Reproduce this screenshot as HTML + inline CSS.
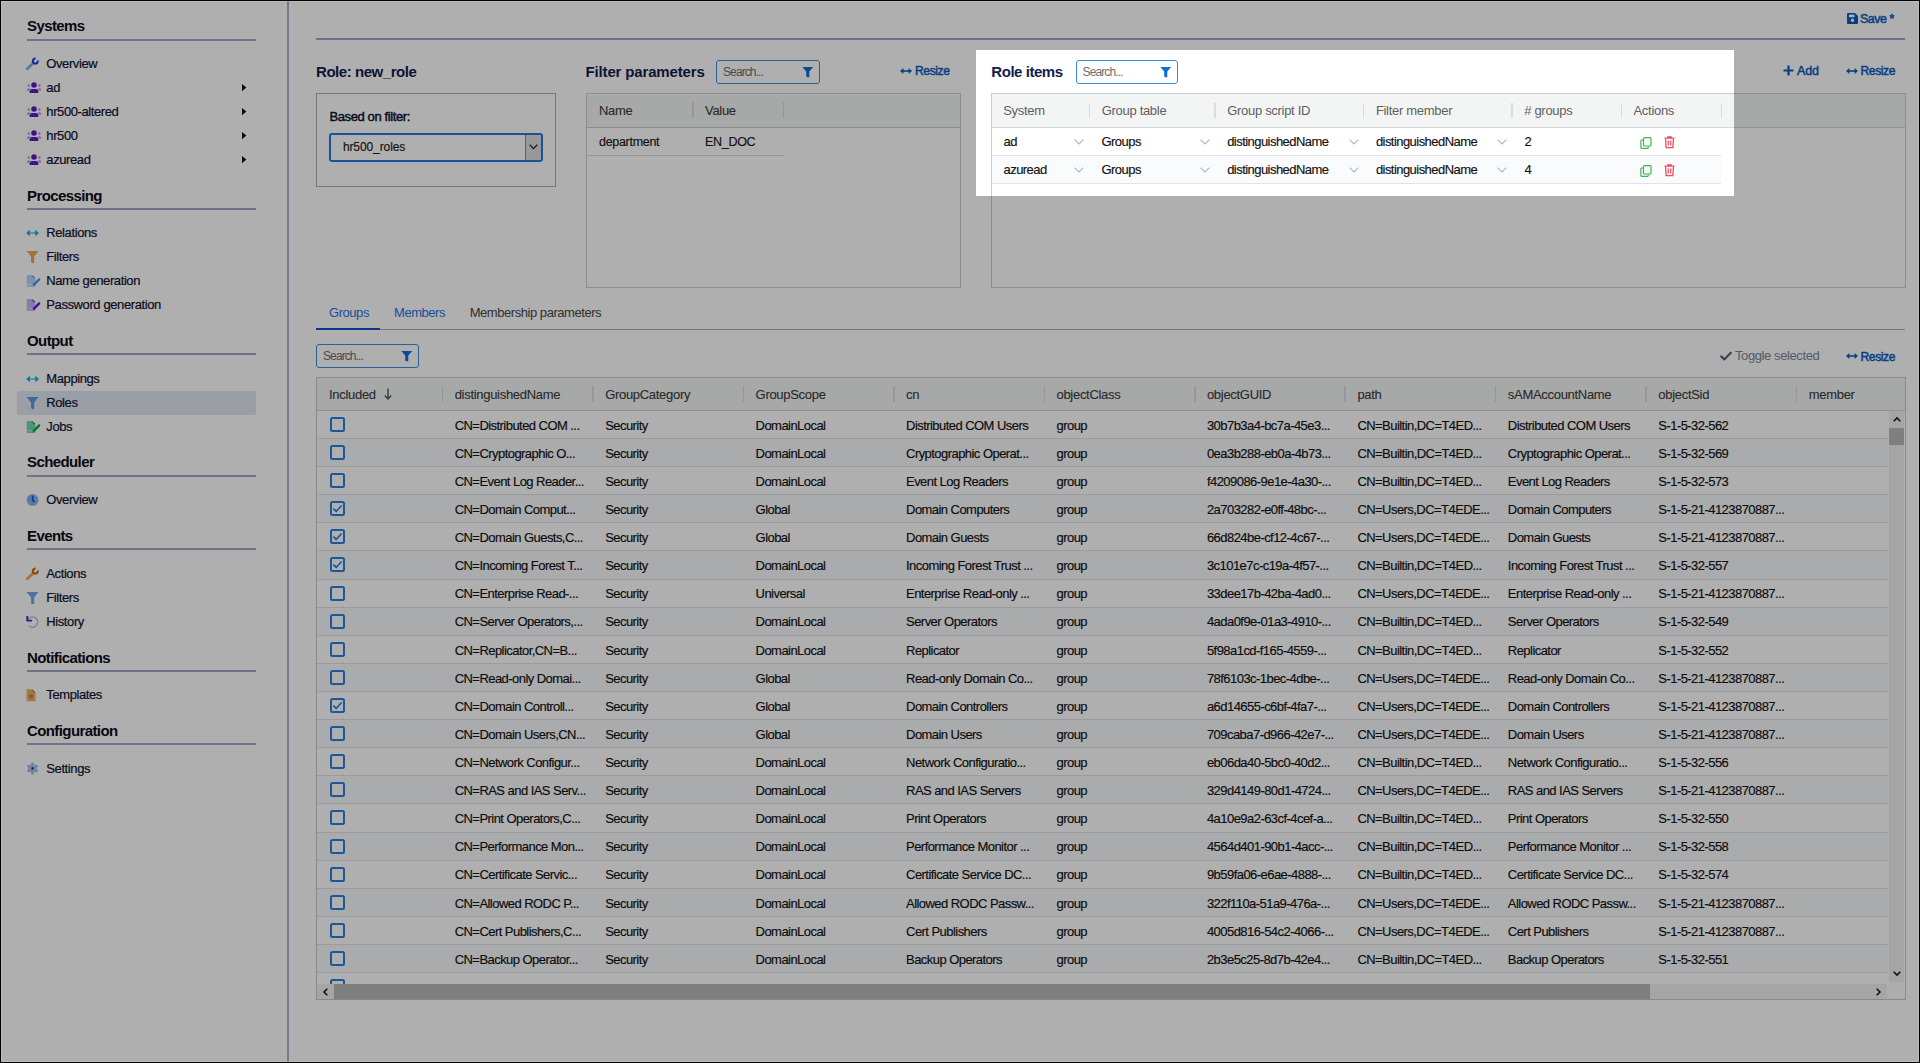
<!DOCTYPE html><html><head><meta charset="utf-8"><style>
*{box-sizing:border-box;margin:0;padding:0}
html,body{width:1920px;height:1063px;overflow:hidden}
body{position:relative;background:#fff;font-family:"Liberation Sans",sans-serif;color:#111}
.a{position:absolute;white-space:nowrap}
.b{position:absolute}
.hd{font-weight:bold;color:#0c0c18;letter-spacing:-0.6px}
.nv{color:#0f1230;letter-spacing:-0.4px;-webkit-text-stroke:0.2px #0f1230}
.lk{color:#0b5cc0;letter-spacing:-0.1px;-webkit-text-stroke:0.5px #0b5cc0}
.ttl{font-weight:bold;color:#141c4e;letter-spacing:-0.45px}
.cell{color:#111;letter-spacing:-0.55px;-webkit-text-stroke:0.15px #111}
.hcell{color:#5f5f5f;letter-spacing:-0.3px}
.hc2{color:#3c3c3c;letter-spacing:-0.3px;-webkit-text-stroke:0.1px #3c3c3c}
svg{position:absolute;overflow:visible}
</style></head><body><div class="b" style="left:286.5px;top:0;width:2px;height:1063px;background:#a9b2c7"></div><div class="a hd" style="left:27px;top:18.30px;font-size:15px;line-height:15px;">Systems</div><div class="b" style="left:27px;top:39px;width:229px;height:1.8px;background:#a0aac2"></div><div class="a hd" style="left:27px;top:187.70px;font-size:15px;line-height:15px;">Processing</div><div class="b" style="left:27px;top:208px;width:229px;height:1.8px;background:#a0aac2"></div><div class="a hd" style="left:27px;top:333.00px;font-size:15px;line-height:15px;">Output</div><div class="b" style="left:27px;top:353px;width:229px;height:1.8px;background:#a0aac2"></div><div class="a hd" style="left:27px;top:454.30px;font-size:15px;line-height:15px;">Scheduler</div><div class="b" style="left:27px;top:475px;width:229px;height:1.8px;background:#a0aac2"></div><div class="a hd" style="left:27px;top:528.10px;font-size:15px;line-height:15px;">Events</div><div class="b" style="left:27px;top:548px;width:229px;height:1.8px;background:#a0aac2"></div><div class="a hd" style="left:27px;top:649.90px;font-size:15px;line-height:15px;">Notifications</div><div class="b" style="left:27px;top:670px;width:229px;height:1.8px;background:#a0aac2"></div><div class="a hd" style="left:27px;top:723.10px;font-size:15px;line-height:15px;">Configuration</div><div class="b" style="left:27px;top:743px;width:229px;height:1.8px;background:#a0aac2"></div><div class="b" style="left:17px;top:391px;width:239px;height:24px;border-radius:3px;background:#dfe6f3"></div><svg style="left:26px;top:57px" width="14" height="14" viewBox="0 0 14 14"><path d="M1.3 11.8 L7.2 6.1" stroke="#84b0ee" stroke-width="2.8" stroke-linecap="round"/><path d="M9.52 1.6 A2.5 2.5 0 1 0 11.74 3.54" stroke="#1440d0" stroke-width="2.1" fill="none"/></svg><div class="a nv" style="left:46.3px;top:57.00px;font-size:13px;line-height:13px;">Overview</div><svg style="left:26px;top:82px" width="16" height="12" viewBox="0 0 16 12"><circle cx="2.7" cy="3.5" r="1.35" fill="#c2a2f6"/><circle cx="13.4" cy="3.5" r="1.35" fill="#c2a2f6"/><path d="M0.6 8.6 Q0.9 5.8 2.9 6.2 L4.2 6.6 L3.2 9.2 Z" fill="#c2a2f6"/><path d="M15.5 8.6 Q15.2 5.8 13.2 6.2 L11.9 6.6 L12.9 9.2 Z" fill="#c2a2f6"/><circle cx="8" cy="3" r="2.75" fill="#5a1cc0"/><path d="M3.7 11 V9.2 Q3.7 6.9 6 6.9 H10 Q12.3 6.9 12.3 9.2 V11 Z" fill="#5a1cc0"/></svg><div class="a nv" style="left:46.3px;top:81.00px;font-size:13px;line-height:13px;">ad</div><svg style="left:241.8px;top:84px" width="5" height="8" viewBox="0 0 5 8"><path d="M0 0 L4.4 3.6 L0 7.2Z" fill="#14142a"/></svg><svg style="left:26px;top:106px" width="16" height="12" viewBox="0 0 16 12"><circle cx="2.7" cy="3.5" r="1.35" fill="#c2a2f6"/><circle cx="13.4" cy="3.5" r="1.35" fill="#c2a2f6"/><path d="M0.6 8.6 Q0.9 5.8 2.9 6.2 L4.2 6.6 L3.2 9.2 Z" fill="#c2a2f6"/><path d="M15.5 8.6 Q15.2 5.8 13.2 6.2 L11.9 6.6 L12.9 9.2 Z" fill="#c2a2f6"/><circle cx="8" cy="3" r="2.75" fill="#5a1cc0"/><path d="M3.7 11 V9.2 Q3.7 6.9 6 6.9 H10 Q12.3 6.9 12.3 9.2 V11 Z" fill="#5a1cc0"/></svg><div class="a nv" style="left:46.3px;top:105.00px;font-size:13px;line-height:13px;">hr500-altered</div><svg style="left:241.8px;top:108px" width="5" height="8" viewBox="0 0 5 8"><path d="M0 0 L4.4 3.6 L0 7.2Z" fill="#14142a"/></svg><svg style="left:26px;top:130px" width="16" height="12" viewBox="0 0 16 12"><circle cx="2.7" cy="3.5" r="1.35" fill="#c2a2f6"/><circle cx="13.4" cy="3.5" r="1.35" fill="#c2a2f6"/><path d="M0.6 8.6 Q0.9 5.8 2.9 6.2 L4.2 6.6 L3.2 9.2 Z" fill="#c2a2f6"/><path d="M15.5 8.6 Q15.2 5.8 13.2 6.2 L11.9 6.6 L12.9 9.2 Z" fill="#c2a2f6"/><circle cx="8" cy="3" r="2.75" fill="#5a1cc0"/><path d="M3.7 11 V9.2 Q3.7 6.9 6 6.9 H10 Q12.3 6.9 12.3 9.2 V11 Z" fill="#5a1cc0"/></svg><div class="a nv" style="left:46.3px;top:129.00px;font-size:13px;line-height:13px;">hr500</div><svg style="left:241.8px;top:132px" width="5" height="8" viewBox="0 0 5 8"><path d="M0 0 L4.4 3.6 L0 7.2Z" fill="#14142a"/></svg><svg style="left:26px;top:154px" width="16" height="12" viewBox="0 0 16 12"><circle cx="2.7" cy="3.5" r="1.35" fill="#c2a2f6"/><circle cx="13.4" cy="3.5" r="1.35" fill="#c2a2f6"/><path d="M0.6 8.6 Q0.9 5.8 2.9 6.2 L4.2 6.6 L3.2 9.2 Z" fill="#c2a2f6"/><path d="M15.5 8.6 Q15.2 5.8 13.2 6.2 L11.9 6.6 L12.9 9.2 Z" fill="#c2a2f6"/><circle cx="8" cy="3" r="2.75" fill="#5a1cc0"/><path d="M3.7 11 V9.2 Q3.7 6.9 6 6.9 H10 Q12.3 6.9 12.3 9.2 V11 Z" fill="#5a1cc0"/></svg><div class="a nv" style="left:46.3px;top:153.00px;font-size:13px;line-height:13px;">azuread</div><svg style="left:241.8px;top:156px" width="5" height="8" viewBox="0 0 5 8"><path d="M0 0 L4.4 3.6 L0 7.2Z" fill="#14142a"/></svg><svg style="left:26px;top:229.4px" width="14" height="8" viewBox="0 0 14 8"><rect x="3.5" y="3" width="6.5" height="2" fill="#7fd6ee"/><path d="M0.2 4 L3.9 0.8 V7.2Z" fill="#00b4ec"/><path d="M13 4 L9.3 0.8 V7.2Z" fill="#00b4ec"/></svg><div class="a nv" style="left:46.3px;top:226.40px;font-size:13px;line-height:13px;">Relations</div><svg style="left:26px;top:251.39999999999998px" width="13" height="13" viewBox="0 0 13 13"><path d="M0.5 0 H12.5 L8.2 5.4 V11.8 L6.6 12.3 L5.1 11.3 V5.4 Z" fill="#e9a850"/></svg><div class="a nv" style="left:46.3px;top:250.40px;font-size:13px;line-height:13px;">Filters</div><svg style="left:26px;top:275.2px" width="15" height="13" viewBox="0 0 15 13"><path d="M0.8 0 H6.6 L9.3 2.7 V11.9 H0.8Z" fill="#b2d6fa"/><path d="M6.4 0.2 L9.2 3 L8.1 3.2 L6.3 1.4Z" fill="#3d95f5"/><path d="M8 9.6 L13.2 4.4" stroke="#3d95f5" stroke-width="2.2" stroke-linecap="round"/><path d="M1.8 10.2 Q3 8.2 4 9.6 Q4.8 10.4 6 9.8" stroke="#fff" stroke-opacity="0.65" stroke-width="0.9" fill="none"/></svg><div class="a nv" style="left:46.3px;top:274.40px;font-size:13px;line-height:13px;">Name generation</div><svg style="left:26px;top:298.8px" width="15" height="13" viewBox="0 0 15 13"><path d="M0.8 0 H6.6 L9.3 2.7 V11.9 H0.8Z" fill="#ccaef8"/><path d="M6.4 0.2 L9.2 3 L8.1 3.2 L6.3 1.4Z" fill="#5518c8"/><path d="M8 9.6 L13.2 4.4" stroke="#5518c8" stroke-width="2.2" stroke-linecap="round"/><path d="M1.8 10.2 Q3 8.2 4 9.6 Q4.8 10.4 6 9.8" stroke="#fff" stroke-opacity="0.65" stroke-width="0.9" fill="none"/></svg><div class="a nv" style="left:46.3px;top:298.00px;font-size:13px;line-height:13px;">Password generation</div><svg style="left:26px;top:374.8px" width="14" height="8" viewBox="0 0 14 8"><rect x="3.5" y="3" width="6.5" height="2" fill="#7fd6ee"/><path d="M0.2 4 L3.9 0.8 V7.2Z" fill="#00b4ec"/><path d="M13 4 L9.3 0.8 V7.2Z" fill="#00b4ec"/></svg><div class="a nv" style="left:46.3px;top:371.80px;font-size:13px;line-height:13px;">Mappings</div><svg style="left:26px;top:396.8px" width="13" height="13" viewBox="0 0 13 13"><path d="M0.5 0 H12.5 L8.2 5.4 V11.8 L6.6 12.3 L5.1 11.3 V5.4 Z" fill="#5e9ae6"/></svg><div class="a nv" style="left:46.3px;top:395.80px;font-size:13px;line-height:13px;">Roles</div><svg style="left:26px;top:420.8px" width="15" height="13" viewBox="0 0 15 13"><path d="M0.8 0 H6.6 L9.3 2.7 V11.9 H0.8Z" fill="#70d6aa"/><path d="M6.4 0.2 L9.2 3 L8.1 3.2 L6.3 1.4Z" fill="#00a040"/><path d="M8 9.6 L13.2 4.4" stroke="#00a040" stroke-width="2.2" stroke-linecap="round"/><path d="M1.8 10.2 Q3 8.2 4 9.6 Q4.8 10.4 6 9.8" stroke="#fff" stroke-opacity="0.65" stroke-width="0.9" fill="none"/></svg><div class="a nv" style="left:46.3px;top:420.00px;font-size:13px;line-height:13px;">Jobs</div><svg style="left:26px;top:494px" width="13" height="12" viewBox="0 0 13 12"><circle cx="6.6" cy="6" r="5.9" fill="#86b2ee"/><path d="M6.6 2.6 V6.3 L8.1 7.6" stroke="#0052d8" stroke-width="1.6" fill="none" stroke-linecap="round"/></svg><div class="a nv" style="left:46.3px;top:493.00px;font-size:13px;line-height:13px;">Overview</div><svg style="left:26px;top:567px" width="14" height="14" viewBox="0 0 14 14"><path d="M1.3 11.8 L7.2 6.1" stroke="#f0a860" stroke-width="2.8" stroke-linecap="round"/><path d="M9.52 1.6 A2.5 2.5 0 1 0 11.74 3.54" stroke="#d45f00" stroke-width="2.1" fill="none"/></svg><div class="a nv" style="left:46.3px;top:567.00px;font-size:13px;line-height:13px;">Actions</div><svg style="left:26px;top:592px" width="13" height="13" viewBox="0 0 13 13"><path d="M0.5 0 H12.5 L8.2 5.4 V11.8 L6.6 12.3 L5.1 11.3 V5.4 Z" fill="#6fa6ee"/></svg><div class="a nv" style="left:46.3px;top:591.00px;font-size:13px;line-height:13px;">Filters</div><svg style="left:26px;top:615.7px" width="14" height="13" viewBox="0 0 14 13"><path d="M2.9 2.4 A5.1 5.1 0 1 1 3.4 10.2" stroke="#c6a8f2" stroke-width="1.4" fill="none" stroke-linecap="round"/><path d="M1.3 0.6 V4.6 H5.3" stroke="#5518c0" stroke-width="1.9" fill="none" stroke-linecap="round" stroke-linejoin="round"/></svg><div class="a nv" style="left:46.3px;top:614.70px;font-size:13px;line-height:13px;">History</div><svg style="left:26px;top:688.7px" width="11" height="13" viewBox="0 0 11 13"><path d="M0.5 0.2 H6.3 L9.5 3.4 V12.3 H0.5Z" fill="#eab266"/><path d="M6.1 0.4 L9.3 3.6 L8.2 3.8 L6.2 1.8Z" fill="#c85a00"/><rect x="3" y="5.3" width="4" height="3.9" fill="#c85a00" fill-opacity="0.55"/></svg><div class="a nv" style="left:46.3px;top:688.00px;font-size:13px;line-height:13px;">Templates</div><svg style="left:26px;top:762.2px" width="13" height="13" viewBox="0 0 13 13"><rect x="5.2" y="0.6" width="2.6" height="3.2" rx="0.7" fill="#9bbde9" transform="rotate(0 6.5 6.5)"/><rect x="5.2" y="0.6" width="2.6" height="3.2" rx="0.7" fill="#9bbde9" transform="rotate(60 6.5 6.5)"/><rect x="5.2" y="0.6" width="2.6" height="3.2" rx="0.7" fill="#9bbde9" transform="rotate(120 6.5 6.5)"/><rect x="5.2" y="0.6" width="2.6" height="3.2" rx="0.7" fill="#9bbde9" transform="rotate(180 6.5 6.5)"/><rect x="5.2" y="0.6" width="2.6" height="3.2" rx="0.7" fill="#9bbde9" transform="rotate(240 6.5 6.5)"/><rect x="5.2" y="0.6" width="2.6" height="3.2" rx="0.7" fill="#9bbde9" transform="rotate(300 6.5 6.5)"/><circle cx="6.5" cy="6.5" r="4.1" fill="#9bbde9"/><circle cx="6.5" cy="6.5" r="2.3" fill="#fff" fill-opacity="0.55"/><circle cx="6.5" cy="6.5" r="1.4" fill="#0047b3"/></svg><div class="a nv" style="left:46.3px;top:761.70px;font-size:13px;line-height:13px;">Settings</div><div class="b" style="left:316px;top:38.3px;width:1589px;height:1.6px;background:#9ba6bf"></div><svg style="left:1847px;top:13px" width="11" height="11" viewBox="0 0 11 11"><path d="M0 1 Q0 0 1 0 H8 L11 3 V10 Q11 11 10 11 H1 Q0 11 0 10Z" fill="#0b5cc0"/><rect x="2" y="1.6" width="5.5" height="2.6" fill="#fff"/><circle cx="5.5" cy="7.3" r="1.7" fill="#fff"/></svg><div class="a lk" style="left:1860px;top:13.22px;font-size:12.5px;line-height:12.5px;letter-spacing:-0.5px">Save *</div><div class="a ttl" style="left:316px;top:64.20px;font-size:15px;line-height:15px;">Role: new_role</div><div class="b" style="left:316px;top:93px;width:240px;height:94px;border:1.3px solid #aab1b8"></div><div class="a nv" style="left:329.4px;top:110.30px;font-size:13px;line-height:13px;letter-spacing:-0.38px;-webkit-text-stroke:0.45px #0f1230;">Based on filter:</div><div class="b" style="left:329px;top:132.5px;width:213.5px;height:29px;border:2px solid #2378e0;border-radius:3px;background:#fff"></div><div class="b" style="left:525px;top:134.5px;width:15.5px;height:25px;background:#dedede;border-left:1px solid #8a8a8a"></div><svg style="left:528.5px;top:143.5px" width="9" height="6" viewBox="0 0 9 6"><path d="M0.8 0.8 L4.5 4.6 L8.2 0.8" stroke="#222" stroke-width="1.3" fill="none"/></svg><div class="a cell" style="left:342.9px;top:141.04px;font-size:12px;line-height:12px;letter-spacing:-0.1px;color:#222">hr500_roles</div><div class="a ttl" style="left:585.5px;top:64.20px;font-size:15px;line-height:15px;letter-spacing:-0.15px">Filter parameters</div><div class="b" style="left:716px;top:60.2px;width:103.5px;height:24px;border:1.6px solid #3d8fe0;border-radius:3px;background:#fff"></div><div class="a " style="left:723px;top:65.84px;font-size:12px;line-height:12px;color:#6e6e6e;letter-spacing:-0.9px;">Search...</div><svg style="left:801.7px;top:66.5px" width="12" height="11" viewBox="0 0 12 11"><path d="M0.3 0 H11.2 L7.3 4.6 V10.1 L5.9 10.6 L4.2 9.6 V4.6 Z" fill="#0b6fd8"/></svg><svg style="left:900px;top:67px" width="12" height="8" viewBox="0 0 12 8"><path d="M2 4 H10" stroke="#0b5cc0" stroke-width="1.6"/><path d="M0 4 L3.4 1 V7Z M12 4 L8.6 1 V7Z" fill="#0b5cc0"/></svg><div class="a lk" style="left:915px;top:65.24px;font-size:12px;line-height:12px;letter-spacing:-0.35px;">Resize</div><div class="b" style="left:586px;top:93px;width:375px;height:195px;border:1.5px solid #c9ced6;background:#fff"></div><div class="b" style="left:587px;top:94.5px;width:373px;height:33px;background:#f3f5f5;border-bottom:1px solid #c9cfd4"></div><div class="b" style="left:692px;top:102px;width:1.5px;height:16px;background:#dcdcdc"></div><div class="b" style="left:782.5px;top:102px;width:1.5px;height:16px;background:#dcdcdc"></div><div class="a hc2" style="left:599px;top:104.00px;font-size:13px;line-height:13px;">Name</div><div class="a hc2" style="left:705px;top:104.00px;font-size:13px;line-height:13px;">Value</div><div class="a cell" style="left:599px;top:135.72px;font-size:12.5px;line-height:12.5px;color:#1a1a1a;letter-spacing:-0.3px">department</div><div class="a cell" style="left:705px;top:135.72px;font-size:12.5px;line-height:12.5px;color:#1a1a1a;letter-spacing:-0.3px">EN_DOC</div><div class="b" style="left:587px;top:155px;width:196.5px;height:1px;background:#d6dadf"></div><div class="a ttl" style="left:991.3px;top:64.20px;font-size:15px;line-height:15px;">Role items</div><div class="b" style="left:1075.6px;top:60.2px;width:102.6px;height:24px;border:1.6px solid #3d8fe0;border-radius:3px;background:#fff"></div><div class="a " style="left:1082.6px;top:65.84px;font-size:12px;line-height:12px;color:#6e6e6e;letter-spacing:-0.9px;">Search...</div><svg style="left:1160.4px;top:66.5px" width="12" height="11" viewBox="0 0 12 11"><path d="M0.3 0 H11.2 L7.3 4.6 V10.1 L5.9 10.6 L4.2 9.6 V4.6 Z" fill="#0b6fd8"/></svg><svg style="left:1783px;top:65px" width="11" height="11" viewBox="0 0 11 11"><path d="M5.5 0.5 V10.5 M0.5 5.5 H10.5" stroke="#0b5cc0" stroke-width="2.2"/></svg><div class="a lk" style="left:1797px;top:64.92px;font-size:12.5px;line-height:12.5px;letter-spacing:-0.2px;">Add</div><svg style="left:1845.5px;top:67px" width="12" height="8" viewBox="0 0 12 8"><path d="M2 4 H10" stroke="#0b5cc0" stroke-width="1.6"/><path d="M0 4 L3.4 1 V7Z M12 4 L8.6 1 V7Z" fill="#0b5cc0"/></svg><div class="a lk" style="left:1860.5px;top:65.24px;font-size:12px;line-height:12px;letter-spacing:-0.35px;">Resize</div><div class="b" style="left:990.5px;top:93.3px;width:915px;height:194.5px;border:1.5px solid #c9ced6;background:#fff"></div><div class="b" style="left:991.5px;top:94.3px;width:913px;height:33.7px;background:#f3f5f5;border-bottom:1.5px solid #d3d8dd"></div><div class="a hcell" style="left:1003.2px;top:104.00px;font-size:13px;line-height:13px;">System</div><div class="b" style="left:1088.7px;top:102.5px;width:1.5px;height:15px;background:#dcdcdc"></div><div class="a hcell" style="left:1101.7px;top:104.00px;font-size:13px;line-height:13px;">Group table</div><div class="b" style="left:1214.2px;top:102.5px;width:1.5px;height:15px;background:#dcdcdc"></div><div class="a hcell" style="left:1227.2px;top:104.00px;font-size:13px;line-height:13px;">Group script ID</div><div class="b" style="left:1362.9px;top:102.5px;width:1.5px;height:15px;background:#dcdcdc"></div><div class="a hcell" style="left:1375.9px;top:104.00px;font-size:13px;line-height:13px;">Filter member</div><div class="b" style="left:1511.2px;top:102.5px;width:1.5px;height:15px;background:#dcdcdc"></div><div class="a hcell" style="left:1524.2px;top:104.00px;font-size:13px;line-height:13px;"># groups</div><div class="b" style="left:1620.5px;top:102.5px;width:1.5px;height:15px;background:#dcdcdc"></div><div class="a hcell" style="left:1633.5px;top:104.00px;font-size:13px;line-height:13px;">Actions</div><div class="b" style="left:1720.9px;top:102.5px;width:1.5px;height:15px;background:#dcdcdc"></div><div class="b" style="left:992px;top:128.0px;width:729.4px;height:28px;background:#fff;border-bottom:1px solid #dfe2e6"></div><div class="a cell" style="left:1003.5px;top:135.20px;font-size:13px;line-height:13px;">ad</div><svg style="left:1074px;top:139px" width="10" height="6" viewBox="0 0 10 6"><path d="M0.6 0.6 L5 5 L9.4 0.6" stroke="#a6b4d4" stroke-width="1.1" fill="none"/></svg><div class="a cell" style="left:1101.5px;top:135.20px;font-size:13px;line-height:13px;">Groups</div><svg style="left:1200px;top:139px" width="10" height="6" viewBox="0 0 10 6"><path d="M0.6 0.6 L5 5 L9.4 0.6" stroke="#a6b4d4" stroke-width="1.1" fill="none"/></svg><div class="a cell" style="left:1227.2px;top:135.20px;font-size:13px;line-height:13px;">distinguishedName</div><svg style="left:1349px;top:139px" width="10" height="6" viewBox="0 0 10 6"><path d="M0.6 0.6 L5 5 L9.4 0.6" stroke="#a6b4d4" stroke-width="1.1" fill="none"/></svg><div class="a cell" style="left:1375.9px;top:135.20px;font-size:13px;line-height:13px;">distinguishedName</div><svg style="left:1497px;top:139px" width="10" height="6" viewBox="0 0 10 6"><path d="M0.6 0.6 L5 5 L9.4 0.6" stroke="#a6b4d4" stroke-width="1.1" fill="none"/></svg><div class="a cell" style="left:1524.4px;top:135.20px;font-size:13px;line-height:13px;">2</div><svg style="left:1639.5px;top:136.5px" width="12" height="12" viewBox="0 0 12 12"><rect x="3.5" y="0.7" width="7.5" height="8.3" rx="1" fill="none" stroke="#3db84a" stroke-width="1.2"/><path d="M3 3 H1.6 Q0.9 3 0.9 3.7 V10.6 Q0.9 11.3 1.6 11.3 H7.6 Q8.3 11.3 8.3 10.6 V9.6" fill="none" stroke="#3db84a" stroke-width="1.2"/></svg><svg style="left:1663.5px;top:136px" width="11" height="12" viewBox="0 0 11 12"><path d="M0.5 2.2 H10.5 M3.8 2 V0.8 H7.2 V2" stroke="#f04a5c" stroke-width="1.3" fill="none"/><path d="M1.6 2.8 L2.1 11.6 H8.9 L9.4 2.8" stroke="#f04a5c" stroke-width="1.3" fill="none"/><path d="M4.3 4.6 V9.6 M6.7 4.6 V9.6" stroke="#f04a5c" stroke-width="1.2"/></svg><div class="b" style="left:992px;top:156.2px;width:729.4px;height:28px;background:#fafbfd;border-bottom:1px solid #dfe2e6"></div><div class="a cell" style="left:1003.5px;top:163.40px;font-size:13px;line-height:13px;">azuread</div><svg style="left:1074px;top:167.2px" width="10" height="6" viewBox="0 0 10 6"><path d="M0.6 0.6 L5 5 L9.4 0.6" stroke="#a6b4d4" stroke-width="1.1" fill="none"/></svg><div class="a cell" style="left:1101.5px;top:163.40px;font-size:13px;line-height:13px;">Groups</div><svg style="left:1200px;top:167.2px" width="10" height="6" viewBox="0 0 10 6"><path d="M0.6 0.6 L5 5 L9.4 0.6" stroke="#a6b4d4" stroke-width="1.1" fill="none"/></svg><div class="a cell" style="left:1227.2px;top:163.40px;font-size:13px;line-height:13px;">distinguishedName</div><svg style="left:1349px;top:167.2px" width="10" height="6" viewBox="0 0 10 6"><path d="M0.6 0.6 L5 5 L9.4 0.6" stroke="#a6b4d4" stroke-width="1.1" fill="none"/></svg><div class="a cell" style="left:1375.9px;top:163.40px;font-size:13px;line-height:13px;">distinguishedName</div><svg style="left:1497px;top:167.2px" width="10" height="6" viewBox="0 0 10 6"><path d="M0.6 0.6 L5 5 L9.4 0.6" stroke="#a6b4d4" stroke-width="1.1" fill="none"/></svg><div class="a cell" style="left:1524.4px;top:163.40px;font-size:13px;line-height:13px;">4</div><svg style="left:1639.5px;top:164.7px" width="12" height="12" viewBox="0 0 12 12"><rect x="3.5" y="0.7" width="7.5" height="8.3" rx="1" fill="none" stroke="#3db84a" stroke-width="1.2"/><path d="M3 3 H1.6 Q0.9 3 0.9 3.7 V10.6 Q0.9 11.3 1.6 11.3 H7.6 Q8.3 11.3 8.3 10.6 V9.6" fill="none" stroke="#3db84a" stroke-width="1.2"/></svg><svg style="left:1663.5px;top:164.2px" width="11" height="12" viewBox="0 0 11 12"><path d="M0.5 2.2 H10.5 M3.8 2 V0.8 H7.2 V2" stroke="#f04a5c" stroke-width="1.3" fill="none"/><path d="M1.6 2.8 L2.1 11.6 H8.9 L9.4 2.8" stroke="#f04a5c" stroke-width="1.3" fill="none"/><path d="M4.3 4.6 V9.6 M6.7 4.6 V9.6" stroke="#f04a5c" stroke-width="1.2"/></svg><div class="b" style="left:316px;top:328.5px;width:1589px;height:1.5px;background:#a3adc4"></div><div class="b" style="left:316px;top:327.6px;width:64px;height:2.6px;background:#1050c8"></div><div class="a " style="left:329px;top:306.00px;font-size:13px;line-height:13px;color:#1f74e0;letter-spacing:-0.45px">Groups</div><div class="a " style="left:394px;top:306.00px;font-size:13px;line-height:13px;color:#1f74e0;letter-spacing:-0.45px">Members</div><div class="a " style="left:469.7px;top:306.00px;font-size:13px;line-height:13px;color:#474747;letter-spacing:-0.45px">Membership parameters</div><div class="b" style="left:316px;top:344.4px;width:102.8px;height:24px;border:1.6px solid #3d8fe0;border-radius:3px;background:#fff"></div><div class="a " style="left:323px;top:350.04px;font-size:12px;line-height:12px;color:#6e6e6e;letter-spacing:-0.9px;">Search...</div><svg style="left:401.0px;top:350.7px" width="12" height="11" viewBox="0 0 12 11"><path d="M0.3 0 H11.2 L7.3 4.6 V10.1 L5.9 10.6 L4.2 9.6 V4.6 Z" fill="#0b6fd8"/></svg><svg style="left:1719.5px;top:351px" width="12" height="10" viewBox="0 0 12 10"><path d="M1.2 5.4 L4.3 8.4 L10.8 1.8" stroke="#5a6684" stroke-width="2.2" fill="none" stroke-linecap="round" stroke-linejoin="round"/></svg><div class="a " style="left:1735px;top:349.40px;font-size:13px;line-height:13px;color:#7d8596;letter-spacing:-0.4px">Toggle selected</div><svg style="left:1845.5px;top:352.3px" width="12" height="8" viewBox="0 0 12 8"><path d="M2 4 H10" stroke="#0b5cc0" stroke-width="1.6"/><path d="M0 4 L3.4 1 V7Z M12 4 L8.6 1 V7Z" fill="#0b5cc0"/></svg><div class="a lk" style="left:1860.5px;top:350.54px;font-size:12px;line-height:12px;letter-spacing:-0.35px;">Resize</div><div class="b" style="left:316px;top:377px;width:1590px;height:623px;border:1px solid #c4cad0;background:#fff;overflow:hidden"><div class="b" style="left:0;top:0;width:1600px;height:33.0px;background:#f3f5f5;border-bottom:1px solid #d0d5da"></div><div class="b" style="left:124.7px;top:8.0px;width:1.5px;height:16px;background:#dcdcdc"></div><div class="a hc2" style="left:137.70px;top:10.00px;font-size:13px;line-height:13px;">distinguishedName</div><div class="b" style="left:275.1px;top:8.0px;width:1.5px;height:16px;background:#dcdcdc"></div><div class="a hc2" style="left:288.15px;top:10.00px;font-size:13px;line-height:13px;">GroupCategory</div><div class="b" style="left:425.6px;top:8.0px;width:1.5px;height:16px;background:#dcdcdc"></div><div class="a hc2" style="left:438.60px;top:10.00px;font-size:13px;line-height:13px;">GroupScope</div><div class="b" style="left:576.0px;top:8.0px;width:1.5px;height:16px;background:#dcdcdc"></div><div class="a hc2" style="left:589.05px;top:10.00px;font-size:13px;line-height:13px;">cn</div><div class="b" style="left:726.5px;top:8.0px;width:1.5px;height:16px;background:#dcdcdc"></div><div class="a hc2" style="left:739.50px;top:10.00px;font-size:13px;line-height:13px;">objectClass</div><div class="b" style="left:877.0px;top:8.0px;width:1.5px;height:16px;background:#dcdcdc"></div><div class="a hc2" style="left:889.95px;top:10.00px;font-size:13px;line-height:13px;">objectGUID</div><div class="b" style="left:1027.4px;top:8.0px;width:1.5px;height:16px;background:#dcdcdc"></div><div class="a hc2" style="left:1040.40px;top:10.00px;font-size:13px;line-height:13px;">path</div><div class="b" style="left:1177.8px;top:8.0px;width:1.5px;height:16px;background:#dcdcdc"></div><div class="a hc2" style="left:1190.85px;top:10.00px;font-size:13px;line-height:13px;">sAMAccountName</div><div class="b" style="left:1328.3px;top:8.0px;width:1.5px;height:16px;background:#dcdcdc"></div><div class="a hc2" style="left:1341.30px;top:10.00px;font-size:13px;line-height:13px;">objectSid</div><div class="b" style="left:1478.8px;top:8.0px;width:1.5px;height:16px;background:#dcdcdc"></div><div class="a hc2" style="left:1491.75px;top:10.00px;font-size:13px;line-height:13px;">member</div><div class="a hc2" style="left:12.00px;top:10.00px;font-size:13px;line-height:13px;">Included</div><svg style="left:67.0px;top:10.0px" width="8" height="12" viewBox="0 0 8 12"><path d="M4 0.5 V11 M0.8 7.6 L4 11 L7.2 7.6" stroke="#555" stroke-width="1.4" fill="none"/></svg><div class="b" style="left:0;top:32.95px;width:1570.5px;height:28.11px;background:#fff;border-bottom:1px solid #dfe2e6"></div><div class="b" style="left:13.2px;top:38.95px;width:15px;height:15px;border:2px solid #2a7fe0;border-radius:2.5px;background:#fff"></div><div class="a cell" style="left:137.70px;top:40.75px;font-size:13px;line-height:13px;">CN=Distributed COM ...</div><div class="a cell" style="left:288.15px;top:40.75px;font-size:13px;line-height:13px;">Security</div><div class="a cell" style="left:438.60px;top:40.75px;font-size:13px;line-height:13px;">DomainLocal</div><div class="a cell" style="left:589.05px;top:40.75px;font-size:13px;line-height:13px;">Distributed COM Users</div><div class="a cell" style="left:739.50px;top:40.75px;font-size:13px;line-height:13px;">group</div><div class="a cell" style="left:889.95px;top:40.75px;font-size:13px;line-height:13px;">30b7b3a4-bc7a-45e3...</div><div class="a cell" style="left:1040.40px;top:40.75px;font-size:13px;line-height:13px;">CN=Builtin,DC=T4ED...</div><div class="a cell" style="left:1190.85px;top:40.75px;font-size:13px;line-height:13px;">Distributed COM Users</div><div class="a cell" style="left:1341.30px;top:40.75px;font-size:13px;line-height:13px;">S-1-5-32-562</div><div class="b" style="left:0;top:61.06px;width:1570.5px;height:28.11px;background:#f8f9fc;border-bottom:1px solid #dfe2e6"></div><div class="b" style="left:13.2px;top:67.06px;width:15px;height:15px;border:2px solid #2a7fe0;border-radius:2.5px;background:#fff"></div><div class="a cell" style="left:137.70px;top:68.85px;font-size:13px;line-height:13px;">CN=Cryptographic O...</div><div class="a cell" style="left:288.15px;top:68.85px;font-size:13px;line-height:13px;">Security</div><div class="a cell" style="left:438.60px;top:68.85px;font-size:13px;line-height:13px;">DomainLocal</div><div class="a cell" style="left:589.05px;top:68.85px;font-size:13px;line-height:13px;">Cryptographic Operat...</div><div class="a cell" style="left:739.50px;top:68.85px;font-size:13px;line-height:13px;">group</div><div class="a cell" style="left:889.95px;top:68.85px;font-size:13px;line-height:13px;">0ea3b288-eb0a-4b73...</div><div class="a cell" style="left:1040.40px;top:68.85px;font-size:13px;line-height:13px;">CN=Builtin,DC=T4ED...</div><div class="a cell" style="left:1190.85px;top:68.85px;font-size:13px;line-height:13px;">Cryptographic Operat...</div><div class="a cell" style="left:1341.30px;top:68.85px;font-size:13px;line-height:13px;">S-1-5-32-569</div><div class="b" style="left:0;top:89.16px;width:1570.5px;height:28.11px;background:#fff;border-bottom:1px solid #dfe2e6"></div><div class="b" style="left:13.2px;top:95.16px;width:15px;height:15px;border:2px solid #2a7fe0;border-radius:2.5px;background:#fff"></div><div class="a cell" style="left:137.70px;top:96.96px;font-size:13px;line-height:13px;">CN=Event Log Reader...</div><div class="a cell" style="left:288.15px;top:96.96px;font-size:13px;line-height:13px;">Security</div><div class="a cell" style="left:438.60px;top:96.96px;font-size:13px;line-height:13px;">DomainLocal</div><div class="a cell" style="left:589.05px;top:96.96px;font-size:13px;line-height:13px;">Event Log Readers</div><div class="a cell" style="left:739.50px;top:96.96px;font-size:13px;line-height:13px;">group</div><div class="a cell" style="left:889.95px;top:96.96px;font-size:13px;line-height:13px;">f4209086-9e1e-4a30-...</div><div class="a cell" style="left:1040.40px;top:96.96px;font-size:13px;line-height:13px;">CN=Builtin,DC=T4ED...</div><div class="a cell" style="left:1190.85px;top:96.96px;font-size:13px;line-height:13px;">Event Log Readers</div><div class="a cell" style="left:1341.30px;top:96.96px;font-size:13px;line-height:13px;">S-1-5-32-573</div><div class="b" style="left:0;top:117.26px;width:1570.5px;height:28.11px;background:#f8f9fc;border-bottom:1px solid #dfe2e6"></div><div class="b" style="left:13.2px;top:123.26px;width:15px;height:15px;border:2px solid #2a7fe0;border-radius:2.5px;background:#fff"></div><svg style="left:13.2px;top:123.26px" width="15" height="15" viewBox="0 0 15 15"><path d="M3.4 7.6 L6.2 10.4 L11.6 4.6" stroke="#1f74e0" stroke-width="1.5" fill="none"/></svg><div class="a cell" style="left:137.70px;top:125.06px;font-size:13px;line-height:13px;">CN=Domain Comput...</div><div class="a cell" style="left:288.15px;top:125.06px;font-size:13px;line-height:13px;">Security</div><div class="a cell" style="left:438.60px;top:125.06px;font-size:13px;line-height:13px;">Global</div><div class="a cell" style="left:589.05px;top:125.06px;font-size:13px;line-height:13px;">Domain Computers</div><div class="a cell" style="left:739.50px;top:125.06px;font-size:13px;line-height:13px;">group</div><div class="a cell" style="left:889.95px;top:125.06px;font-size:13px;line-height:13px;">2a703282-e0ff-48bc-...</div><div class="a cell" style="left:1040.40px;top:125.06px;font-size:13px;line-height:13px;">CN=Users,DC=T4EDE...</div><div class="a cell" style="left:1190.85px;top:125.06px;font-size:13px;line-height:13px;">Domain Computers</div><div class="a cell" style="left:1341.30px;top:125.06px;font-size:13px;line-height:13px;">S-1-5-21-4123870887...</div><div class="b" style="left:0;top:145.37px;width:1570.5px;height:28.11px;background:#fff;border-bottom:1px solid #dfe2e6"></div><div class="b" style="left:13.2px;top:151.37px;width:15px;height:15px;border:2px solid #2a7fe0;border-radius:2.5px;background:#fff"></div><svg style="left:13.2px;top:151.37px" width="15" height="15" viewBox="0 0 15 15"><path d="M3.4 7.6 L6.2 10.4 L11.6 4.6" stroke="#1f74e0" stroke-width="1.5" fill="none"/></svg><div class="a cell" style="left:137.70px;top:153.17px;font-size:13px;line-height:13px;">CN=Domain Guests,C...</div><div class="a cell" style="left:288.15px;top:153.17px;font-size:13px;line-height:13px;">Security</div><div class="a cell" style="left:438.60px;top:153.17px;font-size:13px;line-height:13px;">Global</div><div class="a cell" style="left:589.05px;top:153.17px;font-size:13px;line-height:13px;">Domain Guests</div><div class="a cell" style="left:739.50px;top:153.17px;font-size:13px;line-height:13px;">group</div><div class="a cell" style="left:889.95px;top:153.17px;font-size:13px;line-height:13px;">66d824be-cf12-4c67-...</div><div class="a cell" style="left:1040.40px;top:153.17px;font-size:13px;line-height:13px;">CN=Users,DC=T4EDE...</div><div class="a cell" style="left:1190.85px;top:153.17px;font-size:13px;line-height:13px;">Domain Guests</div><div class="a cell" style="left:1341.30px;top:153.17px;font-size:13px;line-height:13px;">S-1-5-21-4123870887...</div><div class="b" style="left:0;top:173.48px;width:1570.5px;height:28.11px;background:#f8f9fc;border-bottom:1px solid #dfe2e6"></div><div class="b" style="left:13.2px;top:179.48px;width:15px;height:15px;border:2px solid #2a7fe0;border-radius:2.5px;background:#fff"></div><svg style="left:13.2px;top:179.48px" width="15" height="15" viewBox="0 0 15 15"><path d="M3.4 7.6 L6.2 10.4 L11.6 4.6" stroke="#1f74e0" stroke-width="1.5" fill="none"/></svg><div class="a cell" style="left:137.70px;top:181.27px;font-size:13px;line-height:13px;">CN=Incoming Forest T...</div><div class="a cell" style="left:288.15px;top:181.27px;font-size:13px;line-height:13px;">Security</div><div class="a cell" style="left:438.60px;top:181.27px;font-size:13px;line-height:13px;">DomainLocal</div><div class="a cell" style="left:589.05px;top:181.27px;font-size:13px;line-height:13px;">Incoming Forest Trust ...</div><div class="a cell" style="left:739.50px;top:181.27px;font-size:13px;line-height:13px;">group</div><div class="a cell" style="left:889.95px;top:181.27px;font-size:13px;line-height:13px;">3c101e7c-c19a-4f57-...</div><div class="a cell" style="left:1040.40px;top:181.27px;font-size:13px;line-height:13px;">CN=Builtin,DC=T4ED...</div><div class="a cell" style="left:1190.85px;top:181.27px;font-size:13px;line-height:13px;">Incoming Forest Trust ...</div><div class="a cell" style="left:1341.30px;top:181.27px;font-size:13px;line-height:13px;">S-1-5-32-557</div><div class="b" style="left:0;top:201.58px;width:1570.5px;height:28.11px;background:#fff;border-bottom:1px solid #dfe2e6"></div><div class="b" style="left:13.2px;top:207.58px;width:15px;height:15px;border:2px solid #2a7fe0;border-radius:2.5px;background:#fff"></div><div class="a cell" style="left:137.70px;top:209.38px;font-size:13px;line-height:13px;">CN=Enterprise Read-...</div><div class="a cell" style="left:288.15px;top:209.38px;font-size:13px;line-height:13px;">Security</div><div class="a cell" style="left:438.60px;top:209.38px;font-size:13px;line-height:13px;">Universal</div><div class="a cell" style="left:589.05px;top:209.38px;font-size:13px;line-height:13px;">Enterprise Read-only ...</div><div class="a cell" style="left:739.50px;top:209.38px;font-size:13px;line-height:13px;">group</div><div class="a cell" style="left:889.95px;top:209.38px;font-size:13px;line-height:13px;">33dee17b-42ba-4ad0...</div><div class="a cell" style="left:1040.40px;top:209.38px;font-size:13px;line-height:13px;">CN=Users,DC=T4EDE...</div><div class="a cell" style="left:1190.85px;top:209.38px;font-size:13px;line-height:13px;">Enterprise Read-only ...</div><div class="a cell" style="left:1341.30px;top:209.38px;font-size:13px;line-height:13px;">S-1-5-21-4123870887...</div><div class="b" style="left:0;top:229.68px;width:1570.5px;height:28.11px;background:#f8f9fc;border-bottom:1px solid #dfe2e6"></div><div class="b" style="left:13.2px;top:235.68px;width:15px;height:15px;border:2px solid #2a7fe0;border-radius:2.5px;background:#fff"></div><div class="a cell" style="left:137.70px;top:237.48px;font-size:13px;line-height:13px;">CN=Server Operators,...</div><div class="a cell" style="left:288.15px;top:237.48px;font-size:13px;line-height:13px;">Security</div><div class="a cell" style="left:438.60px;top:237.48px;font-size:13px;line-height:13px;">DomainLocal</div><div class="a cell" style="left:589.05px;top:237.48px;font-size:13px;line-height:13px;">Server Operators</div><div class="a cell" style="left:739.50px;top:237.48px;font-size:13px;line-height:13px;">group</div><div class="a cell" style="left:889.95px;top:237.48px;font-size:13px;line-height:13px;">4ada0f9e-01a3-4910-...</div><div class="a cell" style="left:1040.40px;top:237.48px;font-size:13px;line-height:13px;">CN=Builtin,DC=T4ED...</div><div class="a cell" style="left:1190.85px;top:237.48px;font-size:13px;line-height:13px;">Server Operators</div><div class="a cell" style="left:1341.30px;top:237.48px;font-size:13px;line-height:13px;">S-1-5-32-549</div><div class="b" style="left:0;top:257.79px;width:1570.5px;height:28.11px;background:#fff;border-bottom:1px solid #dfe2e6"></div><div class="b" style="left:13.2px;top:263.79px;width:15px;height:15px;border:2px solid #2a7fe0;border-radius:2.5px;background:#fff"></div><div class="a cell" style="left:137.70px;top:265.59px;font-size:13px;line-height:13px;">CN=Replicator,CN=B...</div><div class="a cell" style="left:288.15px;top:265.59px;font-size:13px;line-height:13px;">Security</div><div class="a cell" style="left:438.60px;top:265.59px;font-size:13px;line-height:13px;">DomainLocal</div><div class="a cell" style="left:589.05px;top:265.59px;font-size:13px;line-height:13px;">Replicator</div><div class="a cell" style="left:739.50px;top:265.59px;font-size:13px;line-height:13px;">group</div><div class="a cell" style="left:889.95px;top:265.59px;font-size:13px;line-height:13px;">5f98a1cd-f165-4559-...</div><div class="a cell" style="left:1040.40px;top:265.59px;font-size:13px;line-height:13px;">CN=Builtin,DC=T4ED...</div><div class="a cell" style="left:1190.85px;top:265.59px;font-size:13px;line-height:13px;">Replicator</div><div class="a cell" style="left:1341.30px;top:265.59px;font-size:13px;line-height:13px;">S-1-5-32-552</div><div class="b" style="left:0;top:285.89px;width:1570.5px;height:28.11px;background:#f8f9fc;border-bottom:1px solid #dfe2e6"></div><div class="b" style="left:13.2px;top:291.89px;width:15px;height:15px;border:2px solid #2a7fe0;border-radius:2.5px;background:#fff"></div><div class="a cell" style="left:137.70px;top:293.69px;font-size:13px;line-height:13px;">CN=Read-only Domai...</div><div class="a cell" style="left:288.15px;top:293.69px;font-size:13px;line-height:13px;">Security</div><div class="a cell" style="left:438.60px;top:293.69px;font-size:13px;line-height:13px;">Global</div><div class="a cell" style="left:589.05px;top:293.69px;font-size:13px;line-height:13px;">Read-only Domain Co...</div><div class="a cell" style="left:739.50px;top:293.69px;font-size:13px;line-height:13px;">group</div><div class="a cell" style="left:889.95px;top:293.69px;font-size:13px;line-height:13px;">78f6103c-1bec-4dbe-...</div><div class="a cell" style="left:1040.40px;top:293.69px;font-size:13px;line-height:13px;">CN=Users,DC=T4EDE...</div><div class="a cell" style="left:1190.85px;top:293.69px;font-size:13px;line-height:13px;">Read-only Domain Co...</div><div class="a cell" style="left:1341.30px;top:293.69px;font-size:13px;line-height:13px;">S-1-5-21-4123870887...</div><div class="b" style="left:0;top:314.00px;width:1570.5px;height:28.11px;background:#fff;border-bottom:1px solid #dfe2e6"></div><div class="b" style="left:13.2px;top:320.00px;width:15px;height:15px;border:2px solid #2a7fe0;border-radius:2.5px;background:#fff"></div><svg style="left:13.2px;top:320.00px" width="15" height="15" viewBox="0 0 15 15"><path d="M3.4 7.6 L6.2 10.4 L11.6 4.6" stroke="#1f74e0" stroke-width="1.5" fill="none"/></svg><div class="a cell" style="left:137.70px;top:321.80px;font-size:13px;line-height:13px;">CN=Domain Controll...</div><div class="a cell" style="left:288.15px;top:321.80px;font-size:13px;line-height:13px;">Security</div><div class="a cell" style="left:438.60px;top:321.80px;font-size:13px;line-height:13px;">Global</div><div class="a cell" style="left:589.05px;top:321.80px;font-size:13px;line-height:13px;">Domain Controllers</div><div class="a cell" style="left:739.50px;top:321.80px;font-size:13px;line-height:13px;">group</div><div class="a cell" style="left:889.95px;top:321.80px;font-size:13px;line-height:13px;">a6d14655-c6bf-4fa7-...</div><div class="a cell" style="left:1040.40px;top:321.80px;font-size:13px;line-height:13px;">CN=Users,DC=T4EDE...</div><div class="a cell" style="left:1190.85px;top:321.80px;font-size:13px;line-height:13px;">Domain Controllers</div><div class="a cell" style="left:1341.30px;top:321.80px;font-size:13px;line-height:13px;">S-1-5-21-4123870887...</div><div class="b" style="left:0;top:342.11px;width:1570.5px;height:28.11px;background:#f8f9fc;border-bottom:1px solid #dfe2e6"></div><div class="b" style="left:13.2px;top:348.11px;width:15px;height:15px;border:2px solid #2a7fe0;border-radius:2.5px;background:#fff"></div><div class="a cell" style="left:137.70px;top:349.90px;font-size:13px;line-height:13px;">CN=Domain Users,CN...</div><div class="a cell" style="left:288.15px;top:349.90px;font-size:13px;line-height:13px;">Security</div><div class="a cell" style="left:438.60px;top:349.90px;font-size:13px;line-height:13px;">Global</div><div class="a cell" style="left:589.05px;top:349.90px;font-size:13px;line-height:13px;">Domain Users</div><div class="a cell" style="left:739.50px;top:349.90px;font-size:13px;line-height:13px;">group</div><div class="a cell" style="left:889.95px;top:349.90px;font-size:13px;line-height:13px;">709caba7-d966-42e7-...</div><div class="a cell" style="left:1040.40px;top:349.90px;font-size:13px;line-height:13px;">CN=Users,DC=T4EDE...</div><div class="a cell" style="left:1190.85px;top:349.90px;font-size:13px;line-height:13px;">Domain Users</div><div class="a cell" style="left:1341.30px;top:349.90px;font-size:13px;line-height:13px;">S-1-5-21-4123870887...</div><div class="b" style="left:0;top:370.21px;width:1570.5px;height:28.11px;background:#fff;border-bottom:1px solid #dfe2e6"></div><div class="b" style="left:13.2px;top:376.21px;width:15px;height:15px;border:2px solid #2a7fe0;border-radius:2.5px;background:#fff"></div><div class="a cell" style="left:137.70px;top:378.01px;font-size:13px;line-height:13px;">CN=Network Configur...</div><div class="a cell" style="left:288.15px;top:378.01px;font-size:13px;line-height:13px;">Security</div><div class="a cell" style="left:438.60px;top:378.01px;font-size:13px;line-height:13px;">DomainLocal</div><div class="a cell" style="left:589.05px;top:378.01px;font-size:13px;line-height:13px;">Network Configuratio...</div><div class="a cell" style="left:739.50px;top:378.01px;font-size:13px;line-height:13px;">group</div><div class="a cell" style="left:889.95px;top:378.01px;font-size:13px;line-height:13px;">eb06da40-5bc0-40d2...</div><div class="a cell" style="left:1040.40px;top:378.01px;font-size:13px;line-height:13px;">CN=Builtin,DC=T4ED...</div><div class="a cell" style="left:1190.85px;top:378.01px;font-size:13px;line-height:13px;">Network Configuratio...</div><div class="a cell" style="left:1341.30px;top:378.01px;font-size:13px;line-height:13px;">S-1-5-32-556</div><div class="b" style="left:0;top:398.32px;width:1570.5px;height:28.11px;background:#f8f9fc;border-bottom:1px solid #dfe2e6"></div><div class="b" style="left:13.2px;top:404.32px;width:15px;height:15px;border:2px solid #2a7fe0;border-radius:2.5px;background:#fff"></div><div class="a cell" style="left:137.70px;top:406.11px;font-size:13px;line-height:13px;">CN=RAS and IAS Serv...</div><div class="a cell" style="left:288.15px;top:406.11px;font-size:13px;line-height:13px;">Security</div><div class="a cell" style="left:438.60px;top:406.11px;font-size:13px;line-height:13px;">DomainLocal</div><div class="a cell" style="left:589.05px;top:406.11px;font-size:13px;line-height:13px;">RAS and IAS Servers</div><div class="a cell" style="left:739.50px;top:406.11px;font-size:13px;line-height:13px;">group</div><div class="a cell" style="left:889.95px;top:406.11px;font-size:13px;line-height:13px;">329d4149-80d1-4724...</div><div class="a cell" style="left:1040.40px;top:406.11px;font-size:13px;line-height:13px;">CN=Users,DC=T4EDE...</div><div class="a cell" style="left:1190.85px;top:406.11px;font-size:13px;line-height:13px;">RAS and IAS Servers</div><div class="a cell" style="left:1341.30px;top:406.11px;font-size:13px;line-height:13px;">S-1-5-21-4123870887...</div><div class="b" style="left:0;top:426.42px;width:1570.5px;height:28.11px;background:#fff;border-bottom:1px solid #dfe2e6"></div><div class="b" style="left:13.2px;top:432.42px;width:15px;height:15px;border:2px solid #2a7fe0;border-radius:2.5px;background:#fff"></div><div class="a cell" style="left:137.70px;top:434.22px;font-size:13px;line-height:13px;">CN=Print Operators,C...</div><div class="a cell" style="left:288.15px;top:434.22px;font-size:13px;line-height:13px;">Security</div><div class="a cell" style="left:438.60px;top:434.22px;font-size:13px;line-height:13px;">DomainLocal</div><div class="a cell" style="left:589.05px;top:434.22px;font-size:13px;line-height:13px;">Print Operators</div><div class="a cell" style="left:739.50px;top:434.22px;font-size:13px;line-height:13px;">group</div><div class="a cell" style="left:889.95px;top:434.22px;font-size:13px;line-height:13px;">4a10e9a2-63cf-4cef-a...</div><div class="a cell" style="left:1040.40px;top:434.22px;font-size:13px;line-height:13px;">CN=Builtin,DC=T4ED...</div><div class="a cell" style="left:1190.85px;top:434.22px;font-size:13px;line-height:13px;">Print Operators</div><div class="a cell" style="left:1341.30px;top:434.22px;font-size:13px;line-height:13px;">S-1-5-32-550</div><div class="b" style="left:0;top:454.52px;width:1570.5px;height:28.11px;background:#f8f9fc;border-bottom:1px solid #dfe2e6"></div><div class="b" style="left:13.2px;top:460.52px;width:15px;height:15px;border:2px solid #2a7fe0;border-radius:2.5px;background:#fff"></div><div class="a cell" style="left:137.70px;top:462.32px;font-size:13px;line-height:13px;">CN=Performance Mon...</div><div class="a cell" style="left:288.15px;top:462.32px;font-size:13px;line-height:13px;">Security</div><div class="a cell" style="left:438.60px;top:462.32px;font-size:13px;line-height:13px;">DomainLocal</div><div class="a cell" style="left:589.05px;top:462.32px;font-size:13px;line-height:13px;">Performance Monitor ...</div><div class="a cell" style="left:739.50px;top:462.32px;font-size:13px;line-height:13px;">group</div><div class="a cell" style="left:889.95px;top:462.32px;font-size:13px;line-height:13px;">4564d401-90b1-4acc-...</div><div class="a cell" style="left:1040.40px;top:462.32px;font-size:13px;line-height:13px;">CN=Builtin,DC=T4ED...</div><div class="a cell" style="left:1190.85px;top:462.32px;font-size:13px;line-height:13px;">Performance Monitor ...</div><div class="a cell" style="left:1341.30px;top:462.32px;font-size:13px;line-height:13px;">S-1-5-32-558</div><div class="b" style="left:0;top:482.63px;width:1570.5px;height:28.11px;background:#fff;border-bottom:1px solid #dfe2e6"></div><div class="b" style="left:13.2px;top:488.63px;width:15px;height:15px;border:2px solid #2a7fe0;border-radius:2.5px;background:#fff"></div><div class="a cell" style="left:137.70px;top:490.43px;font-size:13px;line-height:13px;">CN=Certificate Servic...</div><div class="a cell" style="left:288.15px;top:490.43px;font-size:13px;line-height:13px;">Security</div><div class="a cell" style="left:438.60px;top:490.43px;font-size:13px;line-height:13px;">DomainLocal</div><div class="a cell" style="left:589.05px;top:490.43px;font-size:13px;line-height:13px;">Certificate Service DC...</div><div class="a cell" style="left:739.50px;top:490.43px;font-size:13px;line-height:13px;">group</div><div class="a cell" style="left:889.95px;top:490.43px;font-size:13px;line-height:13px;">9b59fa06-e6ae-4888-...</div><div class="a cell" style="left:1040.40px;top:490.43px;font-size:13px;line-height:13px;">CN=Builtin,DC=T4ED...</div><div class="a cell" style="left:1190.85px;top:490.43px;font-size:13px;line-height:13px;">Certificate Service DC...</div><div class="a cell" style="left:1341.30px;top:490.43px;font-size:13px;line-height:13px;">S-1-5-32-574</div><div class="b" style="left:0;top:510.74px;width:1570.5px;height:28.11px;background:#f8f9fc;border-bottom:1px solid #dfe2e6"></div><div class="b" style="left:13.2px;top:516.74px;width:15px;height:15px;border:2px solid #2a7fe0;border-radius:2.5px;background:#fff"></div><div class="a cell" style="left:137.70px;top:518.53px;font-size:13px;line-height:13px;">CN=Allowed RODC P...</div><div class="a cell" style="left:288.15px;top:518.53px;font-size:13px;line-height:13px;">Security</div><div class="a cell" style="left:438.60px;top:518.53px;font-size:13px;line-height:13px;">DomainLocal</div><div class="a cell" style="left:589.05px;top:518.53px;font-size:13px;line-height:13px;">Allowed RODC Passw...</div><div class="a cell" style="left:739.50px;top:518.53px;font-size:13px;line-height:13px;">group</div><div class="a cell" style="left:889.95px;top:518.53px;font-size:13px;line-height:13px;">322f110a-51a9-476a-...</div><div class="a cell" style="left:1040.40px;top:518.53px;font-size:13px;line-height:13px;">CN=Users,DC=T4EDE...</div><div class="a cell" style="left:1190.85px;top:518.53px;font-size:13px;line-height:13px;">Allowed RODC Passw...</div><div class="a cell" style="left:1341.30px;top:518.53px;font-size:13px;line-height:13px;">S-1-5-21-4123870887...</div><div class="b" style="left:0;top:538.84px;width:1570.5px;height:28.11px;background:#fff;border-bottom:1px solid #dfe2e6"></div><div class="b" style="left:13.2px;top:544.84px;width:15px;height:15px;border:2px solid #2a7fe0;border-radius:2.5px;background:#fff"></div><div class="a cell" style="left:137.70px;top:546.64px;font-size:13px;line-height:13px;">CN=Cert Publishers,C...</div><div class="a cell" style="left:288.15px;top:546.64px;font-size:13px;line-height:13px;">Security</div><div class="a cell" style="left:438.60px;top:546.64px;font-size:13px;line-height:13px;">DomainLocal</div><div class="a cell" style="left:589.05px;top:546.64px;font-size:13px;line-height:13px;">Cert Publishers</div><div class="a cell" style="left:739.50px;top:546.64px;font-size:13px;line-height:13px;">group</div><div class="a cell" style="left:889.95px;top:546.64px;font-size:13px;line-height:13px;">4005d816-54c2-4066-...</div><div class="a cell" style="left:1040.40px;top:546.64px;font-size:13px;line-height:13px;">CN=Users,DC=T4EDE...</div><div class="a cell" style="left:1190.85px;top:546.64px;font-size:13px;line-height:13px;">Cert Publishers</div><div class="a cell" style="left:1341.30px;top:546.64px;font-size:13px;line-height:13px;">S-1-5-21-4123870887...</div><div class="b" style="left:0;top:566.94px;width:1570.5px;height:28.11px;background:#f8f9fc;border-bottom:1px solid #dfe2e6"></div><div class="b" style="left:13.2px;top:572.94px;width:15px;height:15px;border:2px solid #2a7fe0;border-radius:2.5px;background:#fff"></div><div class="a cell" style="left:137.70px;top:574.74px;font-size:13px;line-height:13px;">CN=Backup Operator...</div><div class="a cell" style="left:288.15px;top:574.74px;font-size:13px;line-height:13px;">Security</div><div class="a cell" style="left:438.60px;top:574.74px;font-size:13px;line-height:13px;">DomainLocal</div><div class="a cell" style="left:589.05px;top:574.74px;font-size:13px;line-height:13px;">Backup Operators</div><div class="a cell" style="left:739.50px;top:574.74px;font-size:13px;line-height:13px;">group</div><div class="a cell" style="left:889.95px;top:574.74px;font-size:13px;line-height:13px;">2b3e5c25-8d7b-42e4...</div><div class="a cell" style="left:1040.40px;top:574.74px;font-size:13px;line-height:13px;">CN=Builtin,DC=T4ED...</div><div class="a cell" style="left:1190.85px;top:574.74px;font-size:13px;line-height:13px;">Backup Operators</div><div class="a cell" style="left:1341.30px;top:574.74px;font-size:13px;line-height:13px;">S-1-5-32-551</div><div class="b" style="left:0;top:595.05px;width:1570.5px;height:28.11px;background:#fff;border-bottom:1px solid #dfe2e6"></div><div class="b" style="left:13.2px;top:601.05px;width:15px;height:15px;border:2px solid #2a7fe0;border-radius:2.5px;background:#fff"></div><div class="b" style="left:1572.0px;top:33.0px;width:15px;height:570.6px;background:#f1f1f1"></div><div class="b" style="left:1572.0px;top:50.0px;width:15px;height:17px;background:#bababa"></div><svg style="left:1575.5px;top:38.5px" width="8" height="5" viewBox="0 0 8 5"><path d="M0.7 4.3 L4 1 L7.3 4.3" stroke="#1a1a1a" stroke-width="1.6" fill="none"/></svg><svg style="left:1575.5px;top:592.5px" width="8" height="5" viewBox="0 0 8 5"><path d="M0.7 0.7 L4 4 L7.3 0.7" stroke="#1a1a1a" stroke-width="1.6" fill="none"/></svg><div class="b" style="left:0;top:605.7px;width:1570.0px;height:15.3px;background:#f1f1f1"></div><div class="b" style="left:1570.3px;top:603.6px;width:17px;height:17px;background:#fdfdfd"></div><div class="b" style="left:16.9px;top:605.8px;width:1316.1px;height:15px;background:#bababa"></div><svg style="left:5.5px;top:609.5px" width="5" height="8" viewBox="0 0 5 8"><path d="M4.3 0.7 L1 4 L4.3 7.3" stroke="#1a1a1a" stroke-width="1.6" fill="none"/></svg><svg style="left:1559.0px;top:609.5px" width="5" height="8" viewBox="0 0 5 8"><path d="M0.7 0.7 L4 4 L0.7 7.3" stroke="#1a1a1a" stroke-width="1.6" fill="none"/></svg></div><div class="b" style="left:976px;top:50px;width:758px;height:146px;box-shadow:0 0 2px 3000px rgba(0,0,0,0.314)"></div><div class="b" style="left:1px;top:1px;width:1918px;height:1061px;border:1px solid rgba(255,255,255,0.18)"></div><div class="b" style="left:0;top:0;width:1920px;height:1063px;border:1px solid #000"></div></body></html>
